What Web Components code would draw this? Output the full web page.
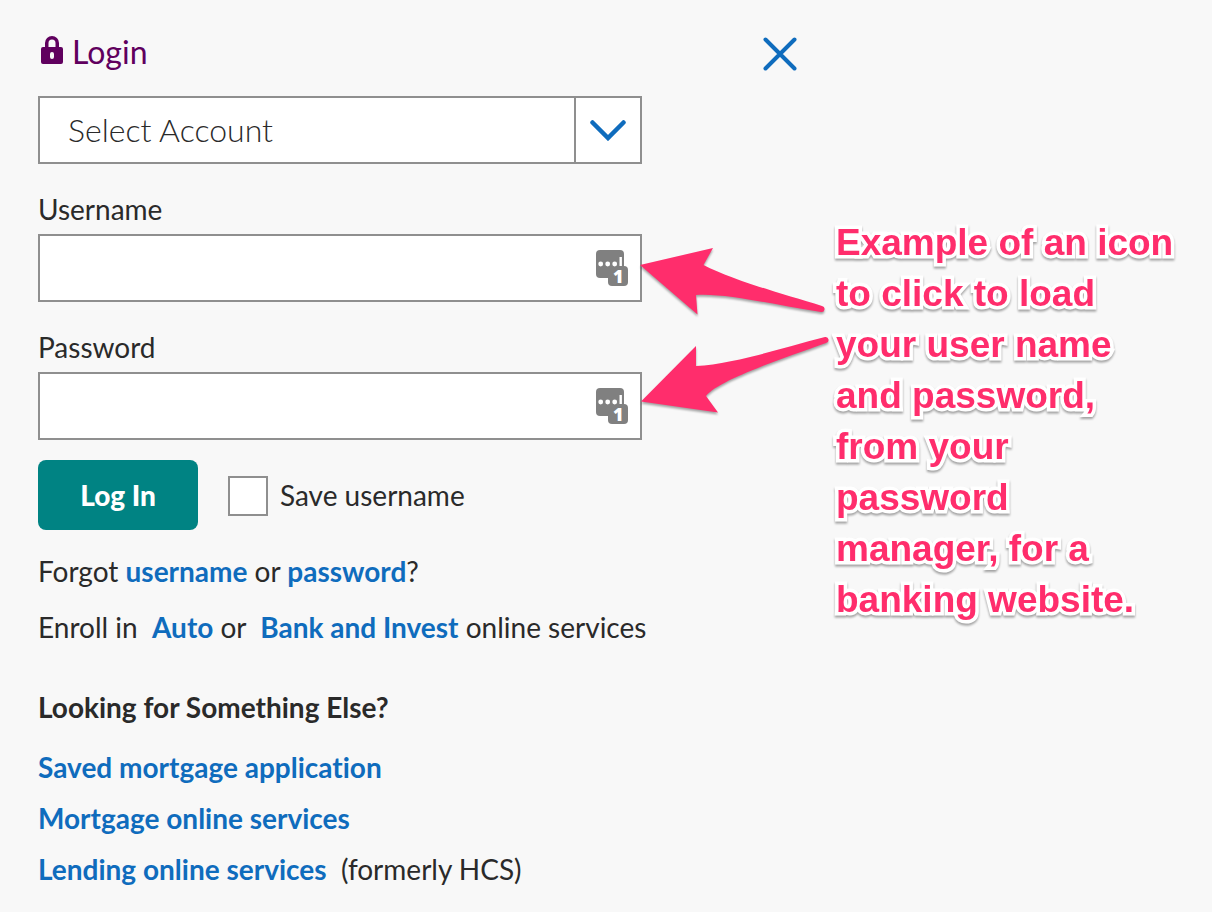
<!DOCTYPE html>
<html lang="en">
<head>
<meta charset="utf-8">
<meta name="viewport" content="width=device-width, initial-scale=1">
<title>Login</title>
<style>
  body {
    margin: 0;
    background: #f8f8f8;
    color: #2a2a2a;
    font: 28px/36px Lato, "Open Sans", sans-serif;
    font-variant-ligatures: no-common-ligatures;
    --link: #0f6cbd;
    --line: #8f8f8f;
  }
</style>
</head>
<body>
<login-page></login-page>

<script>
const define = (name, html, setup) => {
  const template = document.createElement('template');
  template.innerHTML = html.trim();
  customElements.define(name, class extends HTMLElement {
    constructor() {
      super();
      this.attachShadow({ mode: 'open' }).append(template.content.cloneNode(true));
    }
    connectedCallback() {
      if (setup) setup(this, this.shadowRoot);
    }
  });
};

define('panel-header', `
  <style>
    :host { display: flex; justify-content: space-between; align-items: center; height: 58px; }
    h1 { display: flex; align-items: center; gap: 9px; margin: 0; color: #60005e; font-size: 32px; font-weight: 400; line-height: 38px; padding-bottom: 2px; }
    svg { display: block; }
    button { margin: 0; padding: 0; border: 0; background: none; cursor: pointer; }
    .lock { margin: 0 0 4px 3px; }
  </style>
  <h1>
    <svg class="lock" width="22" height="28" viewBox="0 0 22 28" aria-hidden="true">
      <path fill="#60005e" fill-rule="evenodd" d="M4 11V7a7 7 0 0 1 14 0v4h2a2 2 0 0 1 2 2v13a2 2 0 0 1-2 2H2a2 2 0 0 1-2-2V13a2 2 0 0 1 2-2zM7.500 11h7V7a3.500 3.500 0 0 0-7 0zM9 18v3a2 2 0 0 0 4 0v-3a2 2 0 0 0-4 0z"/>
    </svg>
    <slot></slot>
  </h1>
  <button type="button" aria-label="Close">
    <svg width="36" height="36" viewBox="0 0 36 36"><path d="M3.500 4.500l29 29M32.500 4.500l-29 29" stroke="#0f6cbd" stroke-width="4" stroke-linecap="round"/></svg>
  </button>
`);

define('account-select', `
  <style>
    :host { display: block; position: relative; }
    select {
      display: block; width: 100%; height: 68px; box-sizing: border-box; margin: 0; padding: 0 72px 0 28px;
      border: 2px solid var(--line); border-radius: 0; background: #fff; color: inherit;
      font: inherit; font-size: 32px; font-weight: 300; line-height: 40px; appearance: none;
    }
    .arrow {
      position: absolute; inset: 2px 2px 2px auto; width: 64px; border-left: 2px solid var(--line);
      display: grid; place-items: center; pointer-events: none;
    }
  </style>
  <select aria-label="Account"><option>Select Account</option></select>
  <span class="arrow"><svg width="36" height="22" viewBox="0 0 36 22"><path d="M2.500 3.500L18 19L33.500 3.500" fill="none" stroke="#0f6cbd" stroke-width="4.500" stroke-linecap="round"/></svg></span>
`);

define('text-field', `
  <style>
    :host { display: grid; gap: 8px; }
    label { line-height: 34px; }
    .box { position: relative; }
    input {
      display: block; width: 100%; height: 68px; box-sizing: border-box; margin: 0; padding: 0 60px 0 28px;
      border: 2px solid var(--line); border-radius: 0; background: #fff; color: inherit; font: inherit;
    }
    button { position: absolute; right: 14px; top: 16px; margin: 0; padding: 0; border: 0; background: none; }
    svg { display: block; overflow: visible; }
    text { font: 800 18px "Open Sans", sans-serif; }
  </style>
  <label for="field"><slot></slot></label>
  <div class="box">
    <input id="field">
    <button type="button" aria-label="Fill from password manager">
      <svg width="32" height="36" viewBox="0 0 32 36">
        <rect width="28" height="28" rx="4" fill="#808080"/>
        <rect x="12" y="16" width="20" height="20" rx="4" fill="#808080"/>
        <g fill="#fff">
          <circle cx="4.700" cy="14" r="2.400"/><circle cx="11.700" cy="14" r="2.400"/><circle cx="18.700" cy="14" r="2.400"/>
          <rect x="23.500" y="7" width="2.400" height="9"/>
          <text x="17" y="33">1</text>
        </g>
      </svg>
    </button>
  </div>
`, (host, root) => {
  root.querySelector('input').type = host.getAttribute('type') || 'text';
});

define('login-actions', `
  <style>
    :host { display: flex; align-items: center; gap: 30px; }
    button {
      width: 160px; height: 70px; margin: 0; padding: 0; border: 0; border-radius: 8px;
      background: #008383; color: #fff; font: inherit; font-weight: 900;
    }
    div { display: flex; align-items: center; gap: 12px; padding-top: 2px; }
    label { padding-bottom: 2px; }
    input { appearance: none; width: 40px; height: 40px; box-sizing: border-box; margin: 0; border: 2px solid var(--line); background: #fff; }
  </style>
  <button type="submit">Log In</button>
  <div><input type="checkbox" id="save"><label for="save">Save username</label></div>
`);

define('text-link', `
  <style>
    :host { display: inline; }
    a { color: var(--link); font-weight: 700; text-decoration: none; }
  </style><a href="#"><slot></slot></a>
`);

define('help-links', `
  <style>
    :host { display: block; }
    p, h2, ul { margin: 0; padding: 0; }
    h2 { margin: 44px 0 24px; font-size: 28px; line-height: 36px; font-weight: 700; }
    p + p { margin-top: 20px; }
    ul { display: grid; gap: 15px; list-style: none; }
  </style>
  <p>Forgot <text-link>username</text-link> or <text-link>password</text-link>?</p>
  <p>Enroll in&nbsp; <text-link>Auto</text-link> or&nbsp; <text-link>Bank and Invest</text-link> online services</p>
  <h2>Looking for Something Else?</h2>
  <ul>
    <li><text-link>Saved mortgage application</text-link></li>
    <li><text-link>Mortgage online services</text-link></li>
    <li><text-link>Lending online services</text-link>&nbsp; (formerly HCS)</li>
  </ul>
`);

define('callout-note', `
  <style>
    :host { display: block; position: relative; }
    p {
      margin: 0; color: #ff2d6c; font: 700 37px/51px "Liberation Sans", Arial, sans-serif; white-space: nowrap;
      -webkit-text-stroke: 7px #fff; paint-order: stroke fill; stroke-linejoin: round;
      filter: drop-shadow(0 2px 1px rgba(0, 0, 0, .35));
    }
    svg { position: absolute; left: -200px; top: 23px; filter: drop-shadow(0 2px 1px rgba(0, 0, 0, .35)); }
  </style>
  <svg width="200" height="180" viewBox="636 240 200 180" fill="#ff2d6c" aria-hidden="true">
    <path d="M640 265L713 248L703.500 265C732 280 783 294 822 306A3 3 0 0 1 821 312C770 304 725 293 696 295L697.500 314.500Z"/>
    <path d="M641 401.500L696 346V366C734 364 782 348 825 337A3 3 0 0 1 826 343C784 358 718 380 706 396L718 412.500Z"/>
  </svg>
  <p><slot></slot></p>
`);

define('login-page', `
  <style>
    :host { display: grid; grid-template-columns: minmax(0, 1fr) 376px; column-gap: 38px; align-items: start; padding: 24px 0 24px 38px; }
    form { display: grid; grid-template-columns: minmax(0, 1fr); gap: 28px; margin: 14px 156px 0 0; }
    login-actions { margin-top: -8px; }
    help-links { margin-top: -5px; white-space: nowrap; }
    callout-note { margin-top: 193px; }
  </style>
  <main>
    <panel-header>Login</panel-header>
    <form>
      <account-select></account-select>
      <text-field>Username</text-field>
      <text-field type="password">Password</text-field>
      <login-actions></login-actions>
      <help-links></help-links>
    </form>
  </main>
  <callout-note>Example of an icon<br>to click to load<br>your user name<br>and password,<br>from your<br>password<br>manager, for a<br>banking website.</callout-note>
`);
</script>
</body>
</html>
